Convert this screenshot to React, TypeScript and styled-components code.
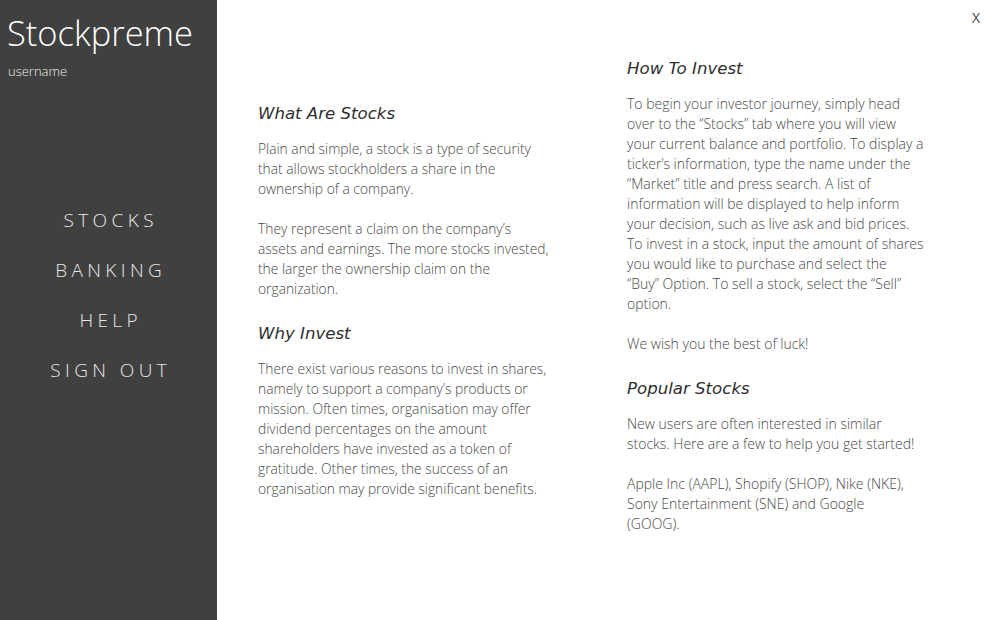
import React from "react";
import styled, { createGlobalStyle } from "styled-components";

const Global = createGlobalStyle`
  html, body { margin: 0; padding: 0; background: #ffffff; }
  body { font-family: "Open Sans", "Noto Sans", sans-serif; }
  * { box-sizing: border-box; }
`;

const Page = styled.div`
  display: flex;
  width: 993px;
  height: 620px;
  position: relative;
  overflow: hidden;
`;

const Sidebar = styled.aside`
  width: 217px;
  flex: 0 0 217px;
  background: #404040;
  color: #f2f2f2;
  display: flex;
  flex-direction: column;
  padding: 11px 0 0 7px;
`;

const Brand = styled.div`
  font-family: "Open Sans", sans-serif;
  font-weight: 300;
  font-size: 34.5px;
  line-height: 44px;
  color: #ffffff;
`;

const User = styled.div`
  font-family: "Open Sans", sans-serif;
  font-weight: 300;
  font-size: 13px;
  line-height: 20px;
  margin-top: 6px;
  padding-left: 1px;
  color: #f0f0f0;
`;

const Nav = styled.nav`
  display: flex;
  flex-direction: column;
  align-items: center;
  margin-top: 126px;
  margin-left: -7px;
  gap: 24px;
`;

const NavItem = styled.a`
  font-family: "Open Sans", sans-serif;
  font-weight: 300;
  font-size: 19px;
  line-height: 26px;
  letter-spacing: 4.4px;
  padding-left: 4.4px;
  color: #e8e8e8;
  text-decoration: none;
  cursor: pointer;
`;

const Main = styled.main`
  flex: 1;
  display: flex;
  padding-left: 41px;
  gap: 69px;
`;

const Column = styled.section<{ $top: number }>`
  width: 300px;
  padding-top: ${(p) => p.$top}px;
`;

const Heading = styled.h2`
  font-family: "DejaVu Sans", Verdana, sans-serif;
  font-style: italic;
  font-weight: normal;
  font-size: 16.6px;
  line-height: 22px;
  color: #2e2e2e;
  margin: 24px 0 14px;
  &:first-child { margin-top: 0; }
`;

const Para = styled.p<{ $size: number }>`
  font-family: "Open Sans", sans-serif;
  font-weight: 300;
  font-size: ${(p) => p.$size}px;
  line-height: 20px;
  color: #484848;
  margin: 0 0 20px;
  white-space: nowrap;
  &:last-child { margin-bottom: 0; }
`;

const Close = styled.button`
  position: absolute;
  top: 8px;
  right: 13px;
  border: none;
  background: transparent;
  font-family: "Open Sans", sans-serif;
  font-size: 14px;
  color: #444;
  cursor: pointer;
  padding: 0;
`;

const Lines = ({ lines, size = 13.8 }: { lines: string[]; size?: number }) => (
  <Para $size={size}>
    {lines.map((l, i) => (
      <React.Fragment key={i}>
        {l}
        {i < lines.length - 1 && <br />}
      </React.Fragment>
    ))}
  </Para>
);

export default function App() {
  return (
    <>
      <Global />
      <Page>
        <Sidebar>
          <Brand>Stockpreme</Brand>
          <User>username</User>
          <Nav>
            <NavItem>STOCKS</NavItem>
            <NavItem>BANKING</NavItem>
            <NavItem>HELP</NavItem>
            <NavItem>SIGN OUT</NavItem>
          </Nav>
        </Sidebar>
        <Main>
          <Column $top={103}>
            <Heading>What Are Stocks</Heading>
            <Lines
              lines={[
                "Plain and simple, a stock is a type of security",
                "that allows stockholders a share in the",
                "ownership of a company.",
              ]}
            />
            <Lines
              lines={[
                "They represent a claim on the company’s",
                "assets and earnings. The more stocks invested,",
                "the larger the ownership claim on the",
                "organization.",
              ]}
            />
            <Heading>Why Invest</Heading>
            <Lines
              lines={[
                "There exist various reasons to invest in shares,",
                "namely to support a company’s products or",
                "mission. Often times, organisation may offer",
                "dividend percentages on the amount",
                "shareholders have invested as a token of",
                "gratitude. Other times, the success of an",
                "organisation may provide significant benefits.",
              ]}
            />
          </Column>
          <Column $top={58}>
            <Heading>How To Invest</Heading>
            <Lines
              size={14}
              lines={[
                "To begin your investor journey, simply head",
                "over to the “Stocks” tab where you will view",
                "your current balance and portfolio. To display a",
                "ticker’s information, type the name under the",
                "“Market” title and press search. A list of",
                "information will be displayed to help inform",
                "your decision, such as live ask and bid prices.",
                "To invest in a stock, input the amount of shares",
                "you would like to purchase and select the",
                "“Buy” Option. To sell a stock, select the “Sell”",
                "option.",
              ]}
            />
            <Lines size={14} lines={["We wish you the best of luck!"]} />
            <Heading>Popular Stocks</Heading>
            <Lines
              size={14}
              lines={[
                "New users are often interested in similar",
                "stocks. Here are a few to help you get started!",
              ]}
            />
            <Lines
              size={14}
              lines={[
                "Apple Inc (AAPL), Shopify (SHOP), Nike (NKE),",
                "Sony Entertainment (SNE) and Google",
                "(GOOG).",
              ]}
            />
          </Column>
        </Main>
        <Close>X</Close>
      </Page>
    </>
  );
}
